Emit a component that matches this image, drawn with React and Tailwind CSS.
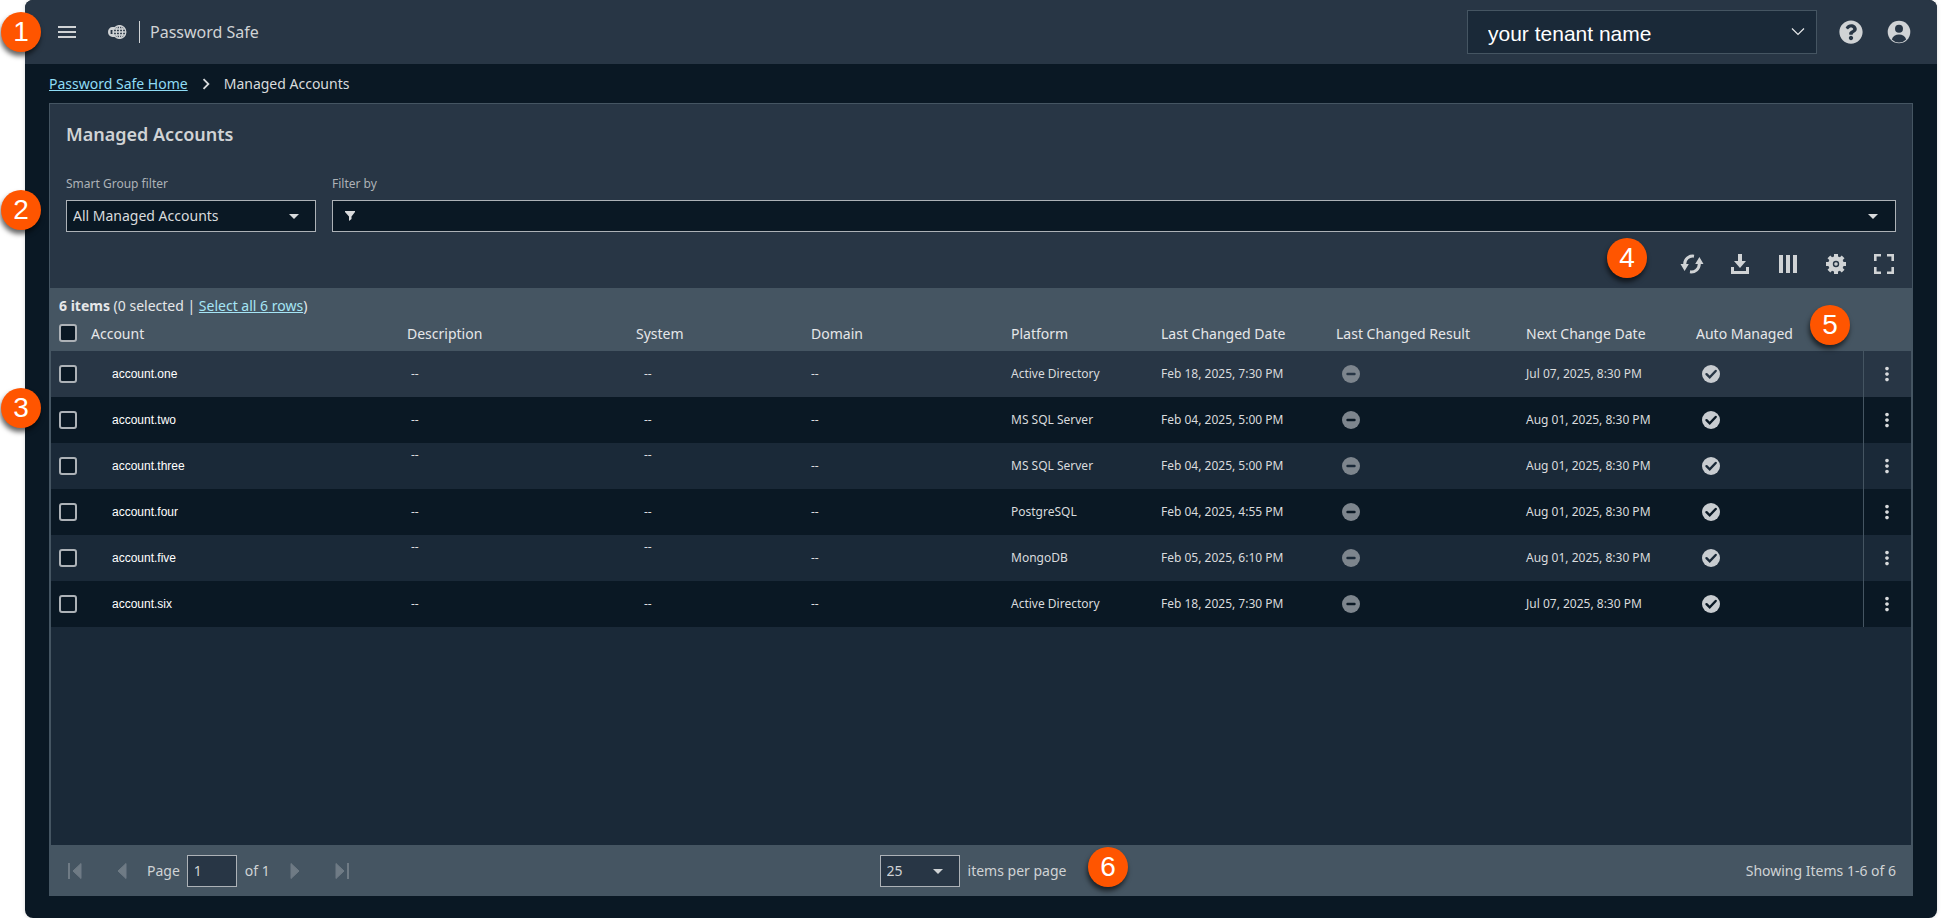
import { useState } from 'react'
import { FaQuestionCircle } from 'react-icons/fa'
import { MdArrowDropDown, MdChevronRight, MdMenu, MdMoreVert } from 'react-icons/md'

const columns = [
  { label: 'Account', width: '' },
  { label: 'Description', width: 'w-[229px]' },
  { label: 'System', width: 'w-[175px]' },
  { label: 'Domain', width: 'w-[200px]' },
  { label: 'Platform', width: 'w-[150px]' },
  { label: 'Last Changed Date', width: 'w-[175px]' },
  { label: 'Last Changed Result', width: 'w-[190px]' },
  { label: 'Next Change Date', width: 'w-[170px]' },
  { label: 'Auto Managed', width: 'w-[175px]' },
]

const accounts = [
  { name: 'account.one', platform: 'Active Directory', changed: 'Feb 18, 2025, 7:30 PM', next: 'Jul 07, 2025, 8:30 PM' },
  { name: 'account.two', platform: 'MS SQL Server', changed: 'Feb 04, 2025, 5:00 PM', next: 'Aug 01, 2025, 8:30 PM' },
  { name: 'account.three', platform: 'MS SQL Server', changed: 'Feb 04, 2025, 5:00 PM', next: 'Aug 01, 2025, 8:30 PM', raised: true },
  { name: 'account.four', platform: 'PostgreSQL', changed: 'Feb 04, 2025, 4:55 PM', next: 'Aug 01, 2025, 8:30 PM' },
  { name: 'account.five', platform: 'MongoDB', changed: 'Feb 05, 2025, 6:10 PM', next: 'Aug 01, 2025, 8:30 PM', raised: true },
  { name: 'account.six', platform: 'Active Directory', changed: 'Feb 18, 2025, 7:30 PM', next: 'Jul 07, 2025, 8:30 PM' },
]

const callouts = [
  { number: 1, place: 'left-[1px] top-3' },
  { number: 2, place: 'left-[1px] top-[190px]' },
  { number: 3, place: 'left-[1px] top-[388px]' },
  { number: 4, place: 'right-[294px] top-[238px]' },
  { number: 5, place: 'right-[91px] top-[305px]' },
  { number: 6, place: 'left-[1088px] top-[847px]' },
]

function Logo() {
  return (
    <svg viewBox="0 0 20 16" className="h-4 w-5" aria-hidden="true">
      <path d="M8 3H5.500A4.500 5 0 0 0 5.500 13H8z" fill="#d0d3d5" />
      <path d="M3.600 6h2v4h-2z" fill="#283645" />
      <circle cx="12.500" cy="8" r="6.300" fill="#283645" stroke="#d0d3d5" strokeWidth="1.300" />
      <ellipse cx="12.500" cy="8" rx="3.200" ry="6.300" fill="none" stroke="#d0d3d5" strokeWidth="1.300" />
      <path d="M12.500 1.700v12.600M6.200 8h12.600M7.300 5h10.400M7.300 11h10.400" stroke="#d0d3d5" strokeWidth="1.300" />
    </svg>
  )
}

function UserIcon() {
  return (
    <svg viewBox="0 0 24 24" className="size-6" aria-hidden="true">
      <circle cx="12" cy="12" r="11.300" fill="currentColor" />
      <circle cx="12" cy="8.800" r="4" fill="#283645" />
      <path d="M4.800 19.400c1-3.200 3.700-5 7.200-5s6.200 1.800 7.200 5a10 10 0 0 1-14.400 0z" fill="#283645" />
    </svg>
  )
}

function RefreshIcon() {
  return (
    <svg viewBox="0 0 24 20" className="h-5 w-6" fill="none" aria-hidden="true">
      <path d="M14 2.200A8 8 0 0 0 4.700 10M10 17.800a8 8 0 0 0 9.300-7.800" stroke="currentColor" strokeWidth="3" />
      <path d="M0.500 10h8.300L4.600 17zM23.500 10h-8.300l4.200-7z" fill="currentColor" />
    </svg>
  )
}

function DownloadIcon() {
  return (
    <svg viewBox="0 0 18 20" className="h-5 w-[18px]" fill="currentColor" aria-hidden="true">
      <path d="M7 0h4v7h4l-6 7-6-7h4z" />
      <path d="M0 13h3v4h12v-4h3v7H0z" />
    </svg>
  )
}

function ColumnsIcon() {
  return (
    <svg viewBox="0 0 18 18" className="size-[18px]" fill="currentColor" aria-hidden="true">
      <path d="M0 0h4v18H0zM7 0h4v18H7zM14 0h4v18h-4z" />
    </svg>
  )
}

function GearIcon() {
  return (
    <svg viewBox="0 0 20 20" className="size-5" fill="none" stroke="currentColor" aria-hidden="true">
      <path d="M10 0v4M10 16v4M0 10h4M16 10h4M2.900 2.900l3 3M14.100 14.100l3 3M2.900 17.100l3-3M14.100 5.900l3-3" strokeWidth="4" />
      <circle cx="10" cy="10" r="5.500" strokeWidth="4.600" />
      <circle cx="10" cy="10" r="1" strokeWidth="1.600" />
    </svg>
  )
}

function FullscreenIcon() {
  return (
    <svg viewBox="0 0 20 20" className="size-5" fill="none" stroke="currentColor" strokeWidth="2.600" aria-hidden="true">
      <path d="M1.300 7V1.300H7M13 1.300h5.700V7M18.700 13v5.700H13M7 18.700H1.300V13" />
    </svg>
  )
}

function FunnelIcon() {
  return (
    <svg viewBox="0 0 10 10" className="size-[10px]" fill="currentColor" aria-hidden="true">
      <path d="M0 0h10v1L6.500 5.500V8L4 10V5.500L0 1z" />
    </svg>
  )
}

function StatusIcon({ ok }) {
  return (
    <svg viewBox="0 0 18 18" className="size-[18px]" role="img" aria-label={ok ? 'Yes' : 'No result'}>
      <mask id={ok ? 'check-cut' : 'minus-cut'}>
        <rect width="18" height="18" fill="white" />
        <path
          d={ok ? 'M4.500 9.200l3.200 3.200 6-6.400' : 'M5.500 9h7'}
          fill="none"
          stroke="black"
          strokeWidth="2.400"
          strokeLinecap="round"
        />
      </mask>
      <circle cx="9" cy="9" r="9" fill={ok ? '#c8ccd0' : '#7d858d'} mask={ok ? 'url(#check-cut)' : 'url(#minus-cut)'} />
    </svg>
  )
}

function PageIcon({ bar, flip }) {
  return (
    <svg viewBox="0 0 14 16" className={flip ? 'h-4 w-[14px] rotate-180' : 'h-4 w-[14px]'} fill="currentColor" aria-hidden="true">
      {bar && <path d="M0 0h2v16H0z" />}
      <path d="M13 0.500v15L5 8z" stroke="currentColor" strokeLinejoin="round" />
    </svg>
  )
}

function Checkbox({ label, checked, onChange }) {
  return (
    <input
      type="checkbox"
      aria-label={label}
      checked={checked}
      onChange={onChange}
      className="block size-[18px] appearance-none rounded-[3px] border-2 border-[#adb2b7] bg-[#0a1824] checked:bg-[#8fdcf5]"
    />
  )
}

function TopBar() {
  return (
    <header className="flex h-16 items-center rounded-t-lg bg-[#283645] pl-[30px] pr-[26px]">
      <button type="button" aria-label="Menu" className="text-[#d0d3d5]">
        <MdMenu className="size-6" />
      </button>
      <div className="ml-7 flex items-center">
        <Logo />
        <span className="ml-3 h-[22px] w-px bg-[#d0d3d5]" />
        <span className="ml-[10px] text-base text-[#d0d3d5]">Password Safe</span>
      </div>
      <div className="relative ml-auto h-11 w-[350px]">
        <select
          aria-label="Tenant"
          className="size-full appearance-none border border-[#455562] bg-[#1a2938] pl-5 pt-[3px] font-['Liberation_Sans',sans-serif] text-[21px] text-white"
        >
          <option>your tenant name</option>
        </select>
        <svg viewBox="0 0 14 8" className="pointer-events-none absolute right-3 top-[18px] h-2 w-[14px]" fill="none" stroke="#e6e7e9" strokeWidth="1.200" aria-hidden="true">
          <path d="M1 0.500l6 6 6-6" />
        </svg>
      </div>
      <div className="ml-[22px] flex gap-6 text-[#d0d3d5]">
        <button type="button" aria-label="Help">
          <FaQuestionCircle className="size-6" />
        </button>
        <button type="button" aria-label="Account">
          <UserIcon />
        </button>
      </div>
    </header>
  )
}

function Filters() {
  return (
    <div className="flex gap-4 px-4">
      <div className="w-[250px]">
        <label htmlFor="smart-group" className="block text-xs leading-4 text-[#adb2b7]">
          Smart Group filter
        </label>
        <div className="relative mt-2 h-8">
          <select
            id="smart-group"
            className="size-full appearance-none border border-[#adb2b7] bg-[#0a1824] px-1.5 text-sm text-[#d9dbdd]"
          >
            <option>All Managed Accounts</option>
          </select>
          <MdArrowDropDown className="pointer-events-none absolute right-2.5 top-1 size-6 text-[#d9dbdd]" />
        </div>
      </div>
      <div className="flex-1">
        <label htmlFor="filter-by" className="block text-xs leading-4 text-[#adb2b7]">
          Filter by
        </label>
        <div className="mt-2 flex h-8 items-center border border-[#adb2b7] bg-[#0a1824] pl-3 pr-2.5 text-[#d9dbdd]">
          <FunnelIcon />
          <input id="filter-by" type="text" className="mx-2 h-full min-w-0 flex-1 bg-transparent text-sm outline-none" />
          <MdArrowDropDown className="size-6" />
        </div>
      </div>
    </div>
  )
}

function Toolbar() {
  return (
    <div className="flex h-14 items-center justify-end gap-3 px-[10px] pt-2 text-[#d0d3d5]">
      <button type="button" aria-label="Refresh" className="flex size-9 items-center justify-center">
        <RefreshIcon />
      </button>
      <button type="button" aria-label="Download" className="flex size-9 items-center justify-center">
        <DownloadIcon />
      </button>
      <button type="button" aria-label="Columns" className="flex size-9 items-center justify-center">
        <ColumnsIcon />
      </button>
      <button type="button" aria-label="Settings" className="flex size-9 items-center justify-center">
        <GearIcon />
      </button>
      <button type="button" aria-label="Full screen" className="flex size-9 items-center justify-center">
        <FullscreenIcon />
      </button>
    </div>
  )
}

function AccountsTable({ selected, onToggle, onToggleAll }) {
  return (
    <table className="w-full table-fixed border-collapse text-left text-xs text-[#d9dbdd]">
      <thead className="bg-[#455562] text-sm leading-5 text-[#e6e7e9]">
        <tr className="h-[27px] align-top">
          <th className="w-8 pl-2">
            <Checkbox label="Select all rows" checked={selected.length === accounts.length} onChange={onToggleAll} />
          </th>
          {columns.map(({ label, width }) => (
            <th key={label} className={`${width} px-2 font-normal`}>
              {label}
            </th>
          ))}
          <th className="w-12" aria-label="Actions" />
        </tr>
      </thead>
      <tbody>
        {accounts.map(({ name, platform, changed, next, raised }, index) => (
          <tr key={name} className={index === 0 ? 'h-[46px] bg-[#283645]' : 'h-[46px] odd:bg-[#1a2938] even:bg-[#0a1824]'}>
            <td className="pl-2">
              <Checkbox label={`Select ${name}`} checked={selected.includes(name)} onChange={() => onToggle(name)} />
            </td>
            <td className="pl-[29px] font-['Liberation_Sans',sans-serif] text-white">{name}</td>
            <td className={raised ? 'px-3 pt-1 align-top' : 'px-3'}>--</td>
            <td className={raised ? 'px-4 pt-1 align-top' : 'px-4'}>--</td>
            <td className="px-2">--</td>
            <td className="px-2">{platform}</td>
            <td className="px-2">{changed}</td>
            <td className="px-[14px]">
              <StatusIcon />
            </td>
            <td className="px-2">{next}</td>
            <td className="px-[14px]">
              <StatusIcon ok />
            </td>
            <td className="border-l border-[#455562]">
              <button type="button" aria-label={`Actions for ${name}`} className="mx-auto block text-[#d9dbdd]">
                <MdMoreVert className="size-[22px]" />
              </button>
            </td>
          </tr>
        ))}
      </tbody>
    </table>
  )
}

function Pager() {
  const [page, setPage] = useState('1')

  return (
    <footer className="flex h-[51px] items-center justify-between bg-[#455562] px-4 text-sm text-[#d0d3d5]">
      <div className="flex flex-1 items-center">
        <button type="button" aria-label="First page" className="ml-0.5 text-[#6f7b85]">
          <PageIcon bar />
        </button>
        <button type="button" aria-label="Previous page" className="ml-[31px] text-[#6f7b85]">
          <PageIcon />
        </button>
        <label htmlFor="page" className="ml-5">
          Page
        </label>
        <input
          id="page"
          type="text"
          value={page}
          onChange={(event) => setPage(event.target.value)}
          className="ml-[7px] h-8 w-[50px] border border-[#adb2b7] bg-[#283645] px-1.5"
        />
        <span className="ml-2">of 1</span>
        <button type="button" aria-label="Next page" className="ml-5 text-[#6f7b85]">
          <PageIcon flip />
        </button>
        <button type="button" aria-label="Last page" className="ml-[31px] text-[#6f7b85]">
          <PageIcon bar flip />
        </button>
      </div>
      <div className="flex items-center pr-4">
        <div className="relative h-8 w-20">
          <select
            id="page-size"
            className="size-full appearance-none border border-[#adb2b7] bg-[#283645] px-1.5"
          >
            <option>25</option>
          </select>
          <MdArrowDropDown className="pointer-events-none absolute right-2.5 top-1 size-6" />
        </div>
        <label htmlFor="page-size" className="ml-2">
          items per page
        </label>
      </div>
      <span className="flex-1 text-right">Showing Items 1-6 of 6</span>
    </footer>
  )
}

function App() {
  const [selected, setSelected] = useState([])

  function toggle(name) {
    setSelected((current) => (current.includes(name) ? current.filter((item) => item !== name) : [...current, name]))
  }

  function toggleAll() {
    setSelected((current) => (current.length === accounts.length ? [] : accounts.map(({ name }) => name)))
  }

  return (
    <div className="relative min-h-screen bg-white pl-[25px] pr-1 font-['Noto_Sans',sans-serif]">
      <div className="flex min-h-screen flex-col rounded-lg bg-[#0a1824] shadow-[0_0_4px_rgba(0,0,0,0.15)]">
        <TopBar />
        <nav aria-label="Breadcrumb" className="flex h-[39px] items-center px-6 text-sm text-[#d9dbdd]">
          <a href="#home" className="text-[#8fdcf5] underline">
            Password Safe Home
          </a>
          <MdChevronRight className="mx-[7px] size-[22px]" />
          <span>Managed Accounts</span>
        </nav>

        <main className="mx-6 mb-[22px] flex flex-1 flex-col border border-b-0 border-[#455562] bg-[#283645]">
          <h1 className="px-4 pb-7 pt-4 text-lg leading-7 font-semibold text-[#d0d3d5]">Managed Accounts</h1>
          <Filters />
          <Toolbar />
          <section className="flex flex-1 flex-col border-x border-[#455562] bg-[#1a2938]">
            <p className="flex h-9 items-center bg-[#455562] px-2 text-sm text-[#e6e7e9]">
              <span className="whitespace-pre">
                <b>{accounts.length} items</b> ({selected.length} selected |{' '}
                <button type="button" onClick={toggleAll} className="text-[#a5e5f5] underline">
                  Select all {accounts.length} rows
                </button>
                )
              </span>
            </p>
            <AccountsTable selected={selected} onToggle={toggle} onToggleAll={toggleAll} />
          </section>
          <Pager />
        </main>
      </div>

      {callouts.map(({ number, place }) => (
        <span
          key={number}
          className={`${place} absolute flex size-10 items-center justify-center rounded-full bg-[#ff5500] font-['Liberation_Sans',sans-serif] text-[28px] text-white shadow-[-1px_4px_5px_rgba(0,0,0,0.6)]`}
        >
          {number}
        </span>
      ))}
    </div>
  )
}

export default App
